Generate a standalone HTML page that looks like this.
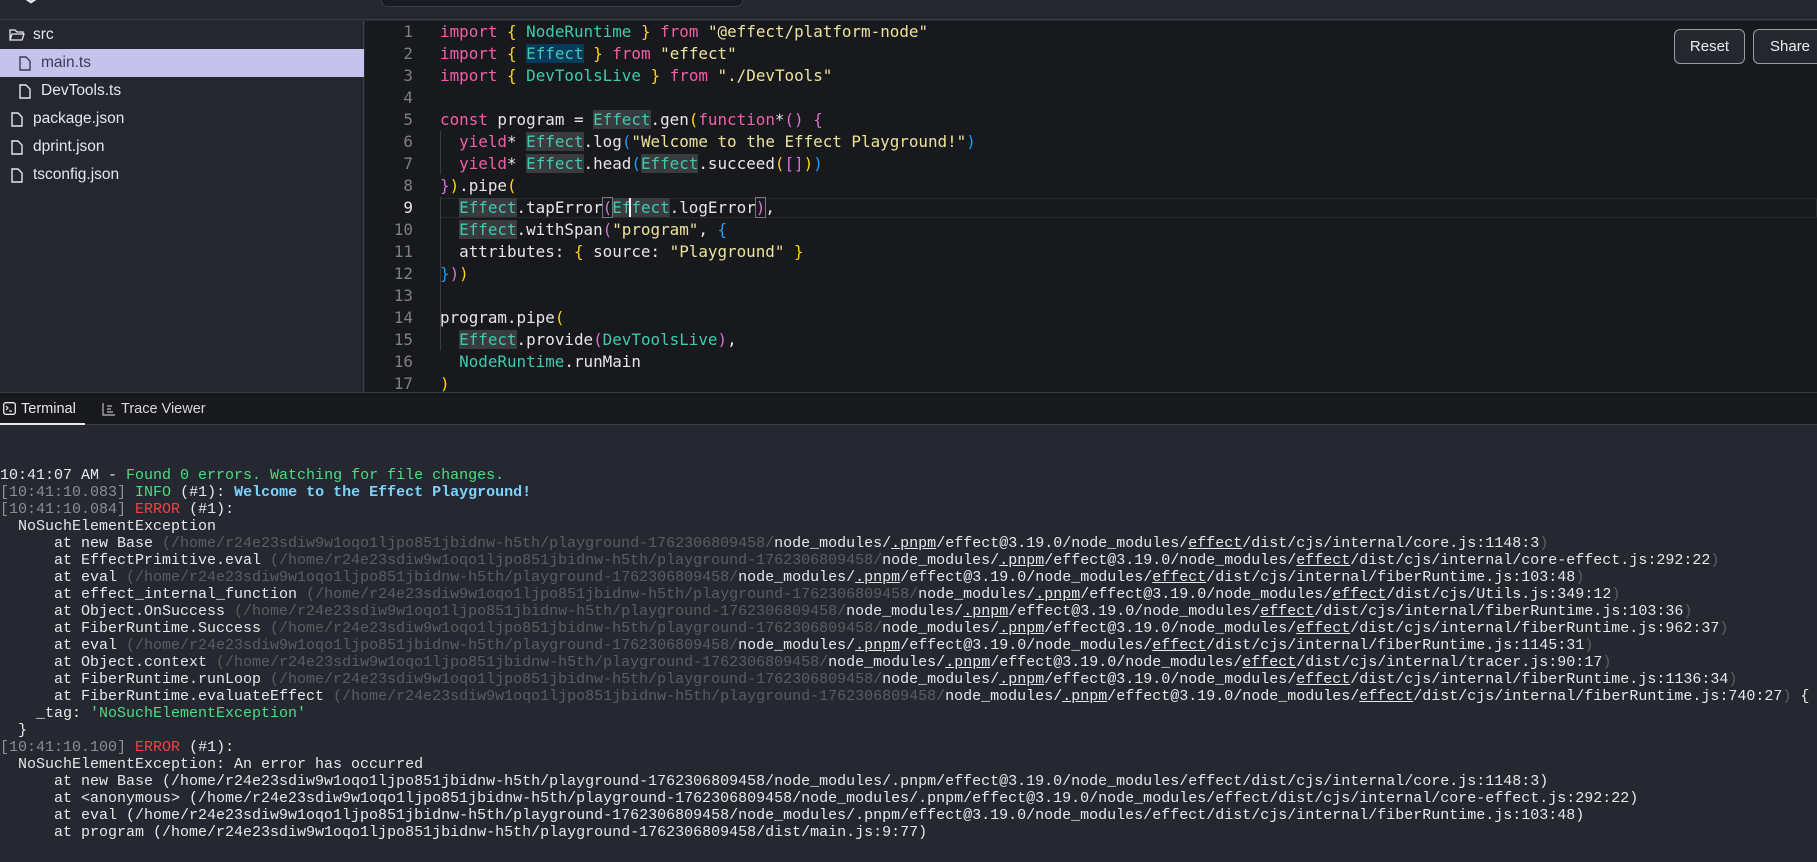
<!DOCTYPE html>
<html><head><meta charset="utf-8">
<style>
*{margin:0;padding:0;box-sizing:border-box}
html,body{width:1817px;height:862px;overflow:hidden;background:#252830}
body{position:relative;font-family:"Liberation Sans",sans-serif}
#hdr{position:absolute;left:0;top:0;width:1817px;height:20px;background:#25272f;border-bottom:1px solid #3a3c44}
#srch{position:absolute;left:381px;top:-6px;width:362px;height:13px;background:#1a1b20;border:1px solid #3a3c44;border-radius:6px}
#side{position:absolute;left:0;top:21px;width:364px;height:371px;background:#25272f;border-right:1px solid #3a3c44}
.row{position:absolute;left:0;width:364px;height:28px;font-size:15.5px;color:#e6e6ea;line-height:28px}
.row svg{position:absolute;top:7px}
#ed{position:absolute;left:365px;top:21px;width:1452px;height:371px;background:#18191d;overflow:hidden}
.ln{position:absolute;left:0;width:48px;text-align:right;font:15.9px "DejaVu Sans Mono",monospace;color:#7d7f85;line-height:22px}
.code{position:absolute;left:75px;top:0;font:15.9px "DejaVu Sans Mono",monospace;color:#e6e6e6;line-height:22px;white-space:pre}
.k{color:#f25fa9}.t{color:#3fcab0}.s{color:#ece39a}.y{color:#ffd700}.p{color:#da70d6}.b{color:#179fff}
.h{background:#3a3b3e}.hb{background:#063a5a}
.btn{position:absolute;top:29px;height:35px;background:#25272f;border:1px solid #9a9ca3;border-radius:6px;color:#eee;font-size:15px;line-height:33px;text-align:center}
#tabs{position:absolute;left:0;top:392px;width:1817px;height:33px;background:#18191d;border-top:1px solid #3a3c44;border-bottom:1px solid #3a3c44}
.tab{position:absolute;top:0;height:32px;line-height:32px;font-size:14.5px;color:#e8e8ea}
#term{position:absolute;left:0;top:467px;font:15px "Liberation Mono",monospace;line-height:17px;color:#e8e8e8;white-space:pre}
.g{color:#8b8d93}.dg{color:#5a5d64}.gr{color:#4ade80}.r{color:#ef4444}.c{color:#7dd3fc;font-weight:bold}
u{text-decoration:underline}
</style></head><body>
<div id="hdr"><svg style="position:absolute;left:20px;top:-6px" width="22" height="12" viewBox="0 0 22 12"><path d="M2 2 L11 8 L20 2" fill="none" stroke="#e8e8e8" stroke-width="2.5"/></svg><div id="srch"></div></div>
<div id="side">
 <div class="row" style="top:0"><svg style="left:9px" width="16" height="14" viewBox="0 0 16 14"><path d="M1 12V2h5l2 2h6v2M1 12l2-6h12l-2 6z" fill="none" stroke="#e6e6ea" stroke-width="1.3"/></svg><span style="position:absolute;left:33px">src</span></div>
 <div class="row" style="top:28px;background:#c5c3ec;color:#3b3a55"><svg style="left:19px" width="12" height="15" viewBox="0 0 12 15"><path d="M1 1h6l4 4v9H1z" fill="none" stroke="#3b3a55" stroke-width="1.4"/></svg><span style="position:absolute;left:41px">main.ts</span></div>
 <div class="row" style="top:56px"><svg style="left:19px" width="12" height="15" viewBox="0 0 12 15"><path d="M1 1h6l4 4v9H1z" fill="none" stroke="#e6e6ea" stroke-width="1.4"/></svg><span style="position:absolute;left:41px">DevTools.ts</span></div>
 <div class="row" style="top:84px"><svg style="left:11px" width="12" height="15" viewBox="0 0 12 15"><path d="M1 1h6l4 4v9H1z" fill="none" stroke="#e6e6ea" stroke-width="1.4"/></svg><span style="position:absolute;left:33px">package.json</span></div>
 <div class="row" style="top:112px"><svg style="left:11px" width="12" height="15" viewBox="0 0 12 15"><path d="M1 1h6l4 4v9H1z" fill="none" stroke="#e6e6ea" stroke-width="1.4"/></svg><span style="position:absolute;left:33px">dprint.json</span></div>
 <div class="row" style="top:140px"><svg style="left:11px" width="12" height="15" viewBox="0 0 12 15"><path d="M1 1h6l4 4v9H1z" fill="none" stroke="#e6e6ea" stroke-width="1.4"/></svg><span style="position:absolute;left:33px">tsconfig.json</span></div>
</div>
<div id="ed">
 <div style="position:absolute;left:75px;top:177px;width:1377px;height:20px;border:1px solid #282a2e"></div>
 <div style="position:absolute;left:75px;top:110px;width:1px;height:44px;background:#3a3c40"></div>
 <div style="position:absolute;left:75px;top:176px;width:1px;height:110px;background:#3a3c40"></div>
 <div style="position:absolute;left:75px;top:286px;width:1px;height:44px;background:#3a3c40"></div>
 <div class="ln" style="top:0">1<br>2<br>3<br>4<br>5<br>6<br>7<br>8<br><span style="color:#e6e6e6">9</span><br>10<br>11<br>12<br>13<br>14<br>15<br>16<br>17</div>
 <div class="code"><span class="k">import</span> <span class="y">{</span> <span class="t">NodeRuntime</span> <span class="y">}</span> <span class="k">from</span> <span class="s">"@effect/platform-node"</span>
<span class="k">import</span> <span class="y">{</span> <span class="t hb">Effect</span> <span class="y">}</span> <span class="k">from</span> <span class="s">"effect"</span>
<span class="k">import</span> <span class="y">{</span> <span class="t">DevToolsLive</span> <span class="y">}</span> <span class="k">from</span> <span class="s">"./DevTools"</span>

<span class="k">const</span> program = <span class="t h">Effect</span>.gen<span class="y">(</span><span class="k">function</span>*<span class="p">()</span> <span class="p">{</span>
  <span class="k">yield</span>* <span class="t h">Effect</span>.log<span class="b">(</span><span class="s">"Welcome to the Effect Playground!"</span><span class="b">)</span>
  <span class="k">yield</span>* <span class="t h">Effect</span>.head<span class="b">(</span><span class="t h">Effect</span>.succeed<span class="y">(</span><span class="p">[]</span><span class="y">)</span><span class="b">)</span>
<span class="p">}</span><span class="y">)</span>.pipe<span class="y">(</span>
  <span class="t h">Effect</span>.tapError<span class="p" style="outline:1px solid #777">(</span><span class="t h">Ef<span style="border-left:2px solid #fff;margin-left:-2px"></span>fect</span>.logError<span class="p" style="outline:1px solid #777">)</span>,
  <span class="t h">Effect</span>.withSpan<span class="p">(</span><span class="s">"program"</span>, <span class="b">{</span>
  attributes: <span class="y">{</span> source: <span class="s">"Playground"</span> <span class="y">}</span>
<span class="b">}</span><span class="p">)</span><span class="y">)</span>

program.pipe<span class="y">(</span>
  <span class="t h">Effect</span>.provide<span class="p">(</span><span class="t">DevToolsLive</span><span class="p">)</span>,
  <span class="t">NodeRuntime</span>.runMain
<span class="y">)</span></div>
</div>
<div class="btn" style="left:1674px;width:71px">Reset</div>
<div class="btn" style="left:1753px;width:80px;text-align:left;padding-left:16px">Share</div>
<div id="tabs">
 <div class="tab" style="left:0;width:85px;border-bottom:2px solid #e8e8ea"><svg style="position:absolute;left:3px;top:9px" width="13" height="13" viewBox="0 0 13 13"><rect x="0.7" y="0.7" width="11.6" height="11.6" rx="2" fill="none" stroke="#e8e8ea" stroke-width="1.3"/><path d="M3 4l2 2-2 2M6 9h3" fill="none" stroke="#e8e8ea" stroke-width="1.2"/></svg><span style="position:absolute;left:21px">Terminal</span></div>
 <div class="tab" style="left:101px"><svg style="position:absolute;left:1px;top:10px" width="14" height="13" viewBox="0 0 14 13"><path d="M1 0v12h12M5 3h5M5 6h4M5 9h6" fill="none" stroke="#bbb" stroke-width="1.2"/></svg><span style="position:absolute;left:20px;white-space:nowrap;color:#d8d8da">Trace Viewer</span></div>
</div>
<div id="term">10:41:07 AM - <span class="gr">Found 0 errors. Watching for file changes.</span>
<span class="g">[10:41:10.083]</span> <span class="gr">INFO</span> (#1): <span class="c">Welcome to the Effect Playground!</span>
<span class="g">[10:41:10.084]</span> <span class="r">ERROR</span> (#1):
  NoSuchElementException
      at new Base <span class="dg">(/home/r24e23sdiw9w1oqo1ljpo851jbidnw-h5th/playground-1762306809458/</span>node_modules/<u>.pnpm</u>/effect@3.19.0/node_modules/<u>effect</u>/dist/cjs/internal/core.js:1148:3<span class="dg">)</span>
      at EffectPrimitive.eval <span class="dg">(/home/r24e23sdiw9w1oqo1ljpo851jbidnw-h5th/playground-1762306809458/</span>node_modules/<u>.pnpm</u>/effect@3.19.0/node_modules/<u>effect</u>/dist/cjs/internal/core-effect.js:292:22<span class="dg">)</span>
      at eval <span class="dg">(/home/r24e23sdiw9w1oqo1ljpo851jbidnw-h5th/playground-1762306809458/</span>node_modules/<u>.pnpm</u>/effect@3.19.0/node_modules/<u>effect</u>/dist/cjs/internal/fiberRuntime.js:103:48<span class="dg">)</span>
      at effect_internal_function <span class="dg">(/home/r24e23sdiw9w1oqo1ljpo851jbidnw-h5th/playground-1762306809458/</span>node_modules/<u>.pnpm</u>/effect@3.19.0/node_modules/<u>effect</u>/dist/cjs/Utils.js:349:12<span class="dg">)</span>
      at Object.OnSuccess <span class="dg">(/home/r24e23sdiw9w1oqo1ljpo851jbidnw-h5th/playground-1762306809458/</span>node_modules/<u>.pnpm</u>/effect@3.19.0/node_modules/<u>effect</u>/dist/cjs/internal/fiberRuntime.js:103:36<span class="dg">)</span>
      at FiberRuntime.Success <span class="dg">(/home/r24e23sdiw9w1oqo1ljpo851jbidnw-h5th/playground-1762306809458/</span>node_modules/<u>.pnpm</u>/effect@3.19.0/node_modules/<u>effect</u>/dist/cjs/internal/fiberRuntime.js:962:37<span class="dg">)</span>
      at eval <span class="dg">(/home/r24e23sdiw9w1oqo1ljpo851jbidnw-h5th/playground-1762306809458/</span>node_modules/<u>.pnpm</u>/effect@3.19.0/node_modules/<u>effect</u>/dist/cjs/internal/fiberRuntime.js:1145:31<span class="dg">)</span>
      at Object.context <span class="dg">(/home/r24e23sdiw9w1oqo1ljpo851jbidnw-h5th/playground-1762306809458/</span>node_modules/<u>.pnpm</u>/effect@3.19.0/node_modules/<u>effect</u>/dist/cjs/internal/tracer.js:90:17<span class="dg">)</span>
      at FiberRuntime.runLoop <span class="dg">(/home/r24e23sdiw9w1oqo1ljpo851jbidnw-h5th/playground-1762306809458/</span>node_modules/<u>.pnpm</u>/effect@3.19.0/node_modules/<u>effect</u>/dist/cjs/internal/fiberRuntime.js:1136:34<span class="dg">)</span>
      at FiberRuntime.evaluateEffect <span class="dg">(/home/r24e23sdiw9w1oqo1ljpo851jbidnw-h5th/playground-1762306809458/</span>node_modules/<u>.pnpm</u>/effect@3.19.0/node_modules/<u>effect</u>/dist/cjs/internal/fiberRuntime.js:740:27<span class="dg">)</span> {
    _tag: <span class="gr">'NoSuchElementException'</span>
  }
<span class="g">[10:41:10.100]</span> <span class="r">ERROR</span> (#1):
  NoSuchElementException: An error has occurred
      at new Base (/home/r24e23sdiw9w1oqo1ljpo851jbidnw-h5th/playground-1762306809458/node_modules/.pnpm/effect@3.19.0/node_modules/effect/dist/cjs/internal/core.js:1148:3)
      at &lt;anonymous&gt; (/home/r24e23sdiw9w1oqo1ljpo851jbidnw-h5th/playground-1762306809458/node_modules/.pnpm/effect@3.19.0/node_modules/effect/dist/cjs/internal/core-effect.js:292:22)
      at eval (/home/r24e23sdiw9w1oqo1ljpo851jbidnw-h5th/playground-1762306809458/node_modules/.pnpm/effect@3.19.0/node_modules/effect/dist/cjs/internal/fiberRuntime.js:103:48)
      at program (/home/r24e23sdiw9w1oqo1ljpo851jbidnw-h5th/playground-1762306809458/dist/main.js:9:77)</div>
</body></html>
